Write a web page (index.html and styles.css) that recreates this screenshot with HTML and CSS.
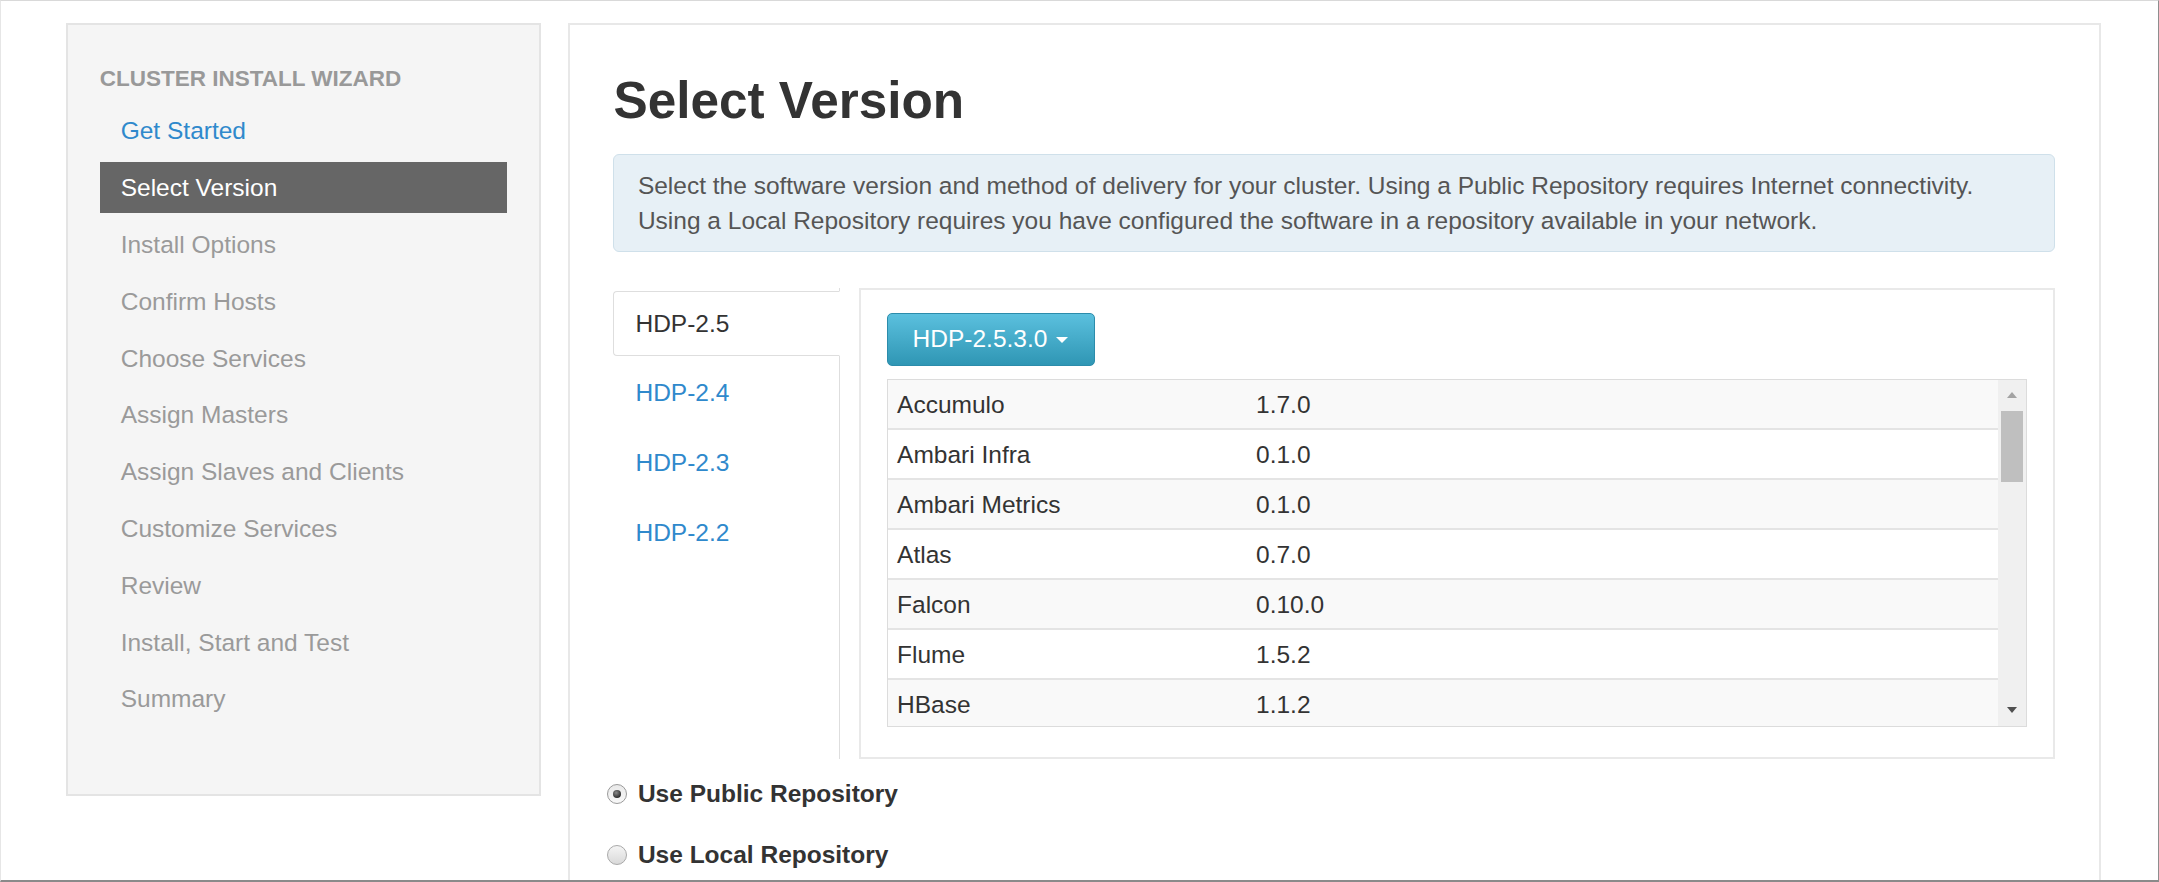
FILE: index.html
```html
<!DOCTYPE html>
<html lang="en">
<head>
<meta charset="utf-8">
<title>Cluster Install Wizard - Select Version</title>
<link rel="stylesheet" href="styles.css">
</head>
<body>
<div class="frame">
  <div class="page">
    <aside class="sidebar">
      <div class="nav-header">CLUSTER INSTALL WIZARD</div>
      <ul class="nav-list">
        <li class="nav-item done">Get Started</li>
        <li class="nav-item active">Select Version</li>
        <li class="nav-item">Install Options</li>
        <li class="nav-item">Confirm Hosts</li>
        <li class="nav-item">Choose Services</li>
        <li class="nav-item">Assign Masters</li>
        <li class="nav-item">Assign Slaves and Clients</li>
        <li class="nav-item">Customize Services</li>
        <li class="nav-item">Review</li>
        <li class="nav-item">Install, Start and Test</li>
        <li class="nav-item">Summary</li>
      </ul>
    </aside>

    <main class="main">
      <h2 class="title">Select Version</h2>
      <div class="alert">Select the software version and method of delivery for your cluster. Using a Public Repository requires Internet connectivity.<br>Using a Local Repository requires you have configured the software in a repository available in your network.</div>

      <div class="tabbable">
        <ul class="tabs">
          <li class="tab active">HDP-2.5</li>
          <li class="tab">HDP-2.4</li>
          <li class="tab">HDP-2.3</li>
          <li class="tab">HDP-2.2</li>
        </ul>
        <div class="tab-content">
          <button class="btn-info" type="button">HDP-2.5.3.0<span class="caret"></span></button>
          <div class="stack-box">
            <div class="rows">
              <div class="row"><span class="c-name">Accumulo</span><span class="c-ver">1.7.0</span></div>
              <div class="row"><span class="c-name">Ambari Infra</span><span class="c-ver">0.1.0</span></div>
              <div class="row"><span class="c-name">Ambari Metrics</span><span class="c-ver">0.1.0</span></div>
              <div class="row"><span class="c-name">Atlas</span><span class="c-ver">0.7.0</span></div>
              <div class="row"><span class="c-name">Falcon</span><span class="c-ver">0.10.0</span></div>
              <div class="row"><span class="c-name">Flume</span><span class="c-ver">1.5.2</span></div>
              <div class="row"><span class="c-name">HBase</span><span class="c-ver">1.1.2</span></div>
            </div>
            <div class="scrollbar">
              <div class="sb-up"><span class="tri-up"></span></div>
              <div class="sb-thumb"></div>
              <div class="sb-track"></div>
              <div class="sb-down"><span class="tri-down"></span></div>
            </div>
          </div>
        </div>
      </div>

      <div class="options">
        <label class="radio"><span class="radio-dot checked"></span>Use Public Repository</label>
        <label class="radio"><span class="radio-dot"></span>Use Local Repository</label>
      </div>
    </main>
  </div>
</div>
</body>
</html>
```

FILE: styles.css
```css
* { box-sizing: border-box; }

html, body {
  margin: 0;
  padding: 0;
  background: #fff;
}

body {
  font-family: "Liberation Sans", Arial, sans-serif;
  font-size: 24.5px;
  line-height: 34.7px;
  color: #333;
}

.frame {
  width: 2159px;
  height: 882px;
  overflow: hidden;
  background: #fff;
  border-top: 1px solid #d9d9d9;
  border-left: 1px solid #e6e6e6;
  border-right: 1px solid #8e8e8e;
  border-bottom: 2px solid #8a8a8a;
}

.page {
  display: flex;
  align-items: flex-start;
  padding: 21.7px 0 0 64.7px;
}

/* ---------- sidebar ---------- */
.sidebar {
  width: 475px;
  height: 773.3px;
  flex: none;
  background: #f5f5f5;
  border: 2px solid #e4e4e4;
  padding: 39.3px 32px 0 32px;
}

.nav-header {
  font-weight: bold;
  font-size: 22.5px;
  line-height: 30px;
  color: #999;
  text-transform: uppercase;
}

.nav-list {
  list-style: none;
  margin: 11.5px 0 0 0;
  padding: 0;
}

.nav-item {
  height: 51px;
  padding: 9px 21px 7.3px 21px;
  margin-bottom: 5.8px;
  color: #9a9a9a;
  white-space: nowrap;
}

.nav-item.done { color: #2f89cc; }

.nav-item.active {
  background: #666;
  color: #fff;
}

/* ---------- main panel ---------- */
.main {
  flex: none;
  width: 1533px;
  min-height: 900px;
  margin-left: 27.3px;
  border: 2px solid #e8e8e8;
  border-bottom: none;
  padding: 48.6px 43.5px 0 43.5px;
}

.title {
  margin: 0;
  font-size: 51.3px;
  line-height: 56px;
  font-weight: bold;
  color: #333;
}

.alert {
  margin-top: 24.7px;
  background: #e7f0f6;
  border: 1px solid #cfe0ea;
  border-radius: 6px;
  padding: 14.2px 24px 12.6px 23.4px;
  color: #555;
  white-space: nowrap;
}

/* ---------- tabs ---------- */
.tabbable {
  display: flex;
  align-items: stretch;
  margin-top: 36px;
}

.tabs {
  list-style: none;
  margin: 0;
  padding: 2.7px 0 0 0;
  width: 226.4px;
  flex: none;
  border-right: 1px solid #dedede;
}

.tab {
  height: 65px;
  padding: 15px 0 13.3px 21px;
  margin-bottom: 4.6px;
  border: 1px solid transparent;
  color: #2f89cc;
}

.tab.active {
  background: #fff;
  color: #333;
  border-color: #dedede;
  border-right-color: #fff;
  border-radius: 4px 0 0 4px;
  margin-right: -1px;
}

.tab-content {
  flex: 1;
  margin-left: 19.3px;
  border: 2px solid #e9e9e9;
  padding: 23px 26px 30px 25.9px;
}

.btn-info {
  display: inline-flex;
  align-items: center;
  height: 52.4px;
  padding: 0 25.5px 0 24.5px;
  border: 1px solid #2c8cab;
  border-radius: 5px;
  background: linear-gradient(to bottom, #5bc0de, #2f96b4);
  color: #fff;
  font-family: inherit;
  font-size: 24.5px;
  line-height: 34.7px;
  cursor: pointer;
}

.caret {
  width: 0;
  height: 0;
  margin-left: 9px;
  margin-top: 2px;
  border-top: 6px solid #fff;
  border-left: 6px solid transparent;
  border-right: 6px solid transparent;
}

.stack-box {
  display: flex;
  height: 348px;
  margin-top: 13.6px;
  border: 1px solid #dcdcdc;
}

.rows {
  flex: 1;
  overflow: hidden;
}

.row {
  display: flex;
  height: 50px;
  padding: 7.5px 0 5.8px 0;
  border-bottom: 2px solid #e4e4e4;
  background: #fff;
}

.row:nth-child(odd) { background: #f9f9f9; }

.c-name {
  width: 358px;
  padding-left: 9px;
}

.c-ver {
  padding-left: 10px;
}

/* fake scrollbar */
.scrollbar {
  width: 28px;
  flex: none;
  display: flex;
  flex-direction: column;
  align-items: center;
  background: #f0f0f0;
}

.sb-up {
  height: 30.4px;
  display: flex;
  align-items: center;
  justify-content: center;
}

.sb-thumb {
  width: 22px;
  height: 71.6px;
  background: #bfbfbf;
}

.sb-track { flex: 1; }

.sb-down {
  height: 33px;
  display: flex;
  align-items: center;
  justify-content: center;
}

.tri-up {
  width: 0;
  height: 0;
  border-bottom: 6px solid #a3a3a3;
  border-left: 5px solid transparent;
  border-right: 5px solid transparent;
}

.tri-down {
  width: 0;
  height: 0;
  border-top: 6px solid #505050;
  border-left: 5px solid transparent;
  border-right: 5px solid transparent;
}

/* ---------- radios ---------- */
.options {
  margin-top: 17.8px;
}

.radio {
  display: flex;
  align-items: center;
  height: 34.7px;
  margin-bottom: 26.1px;
  margin-left: -6.6px;
  font-weight: bold;
  color: #333;
}

.radio-dot {
  width: 20px;
  height: 20px;
  margin-right: 11px;
  border-radius: 50%;
  border: 1px solid #a9a9a9;
  background: linear-gradient(to bottom, #f4f4f4, #d9d9d9);
  display: flex;
  align-items: center;
  justify-content: center;
}

.radio-dot.checked {
  border-color: #9a9a9a;
  background: linear-gradient(to bottom, #e9e9e9, #f8f8f8);
}

.radio-dot.checked::after {
  content: "";
  width: 8px;
  height: 8px;
  border-radius: 50%;
  background: radial-gradient(circle at 40% 35%, #8a8a8a, #2f2f2f 70%);
}
```
